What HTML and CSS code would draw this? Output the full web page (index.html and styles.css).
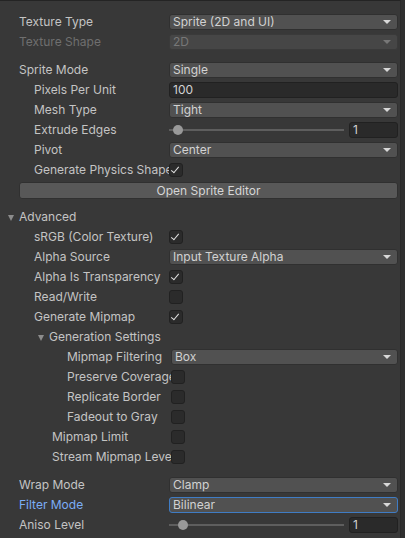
FILE: index.html
```html
<!DOCTYPE html>
<html lang="en">
<head>
  <meta charset="UTF-8" />
  <title>Texture Import Settings</title>
  <link rel="stylesheet" href="styles.css">
</head>
<body>
  <div class="inspector">

    <div class="row">
      <div class="label">Texture Type</div>
      <div class="dropdown">Sprite (2D and UI)<span class="arrow"></span></div>
    </div>
    <div class="row">
      <div class="label disabled">Texture Shape</div>
      <div class="dropdown off">2D<span class="arrow"></span></div>
    </div>

    <div class="gap"></div>

    <div class="row">
      <div class="label">Sprite Mode</div>
      <div class="dropdown">Single<span class="arrow"></span></div>
    </div>
    <div class="row">
      <div class="label in1">Pixels Per Unit</div>
      <div class="field">100</div>
    </div>
    <div class="row">
      <div class="label in1">Mesh Type</div>
      <div class="dropdown">Tight<span class="arrow"></span></div>
    </div>
    <div class="row">
      <div class="label in1">Extrude Edges</div>
      <div class="slider">
        <div class="track"><span class="thumb" style="left: 4px"></span></div>
        <div class="field num">1</div>
      </div>
    </div>
    <div class="row">
      <div class="label in1">Pivot</div>
      <div class="dropdown">Center<span class="arrow"></span></div>
    </div>
    <div class="row">
      <div class="label in1">Generate Physics Shape</div>
      <div class="check on"></div>
    </div>
    <div class="row">
      <div class="button">Open Sprite Editor</div>
    </div>

    <div class="gap small"></div>

    <div class="row">
      <div class="foldout"><span class="tri"></span>Advanced</div>
    </div>
    <div class="row">
      <div class="label in1">sRGB (Color Texture)</div>
      <div class="check on"></div>
    </div>
    <div class="row">
      <div class="label in1">Alpha Source</div>
      <div class="dropdown">Input Texture Alpha<span class="arrow"></span></div>
    </div>
    <div class="row">
      <div class="label in1">Alpha Is Transparency</div>
      <div class="check on"></div>
    </div>
    <div class="row">
      <div class="label in1">Read/Write</div>
      <div class="check"></div>
    </div>
    <div class="row">
      <div class="label in1">Generate Mipmap</div>
      <div class="check on"></div>
    </div>
    <div class="row">
      <div class="foldout in2"><span class="tri"></span>Generation Settings</div>
    </div>
    <div class="row sub">
      <div class="label in3">Mipmap Filtering</div>
      <div class="dropdown">Box<span class="arrow"></span></div>
    </div>
    <div class="row sub">
      <div class="label in3">Preserve Coverage</div>
      <div class="check"></div>
    </div>
    <div class="row sub">
      <div class="label in3">Replicate Border</div>
      <div class="check"></div>
    </div>
    <div class="row sub">
      <div class="label in3">Fadeout to Gray</div>
      <div class="check"></div>
    </div>
    <div class="row sub">
      <div class="label in2b">Mipmap Limit</div>
      <div class="check"></div>
    </div>
    <div class="row sub">
      <div class="label in2b">Stream Mipmap Levels</div>
      <div class="check"></div>
    </div>

    <div class="gap"></div>

    <div class="row">
      <div class="label">Wrap Mode</div>
      <div class="dropdown">Clamp<span class="arrow"></span></div>
    </div>
    <div class="row">
      <div class="label focus">Filter Mode</div>
      <div class="dropdown focused">Bilinear<span class="arrow"></span></div>
    </div>
    <div class="row">
      <div class="label">Aniso Level</div>
      <div class="slider">
        <div class="track"><span class="thumb" style="left: 9px"></span></div>
        <div class="field num">1</div>
      </div>
    </div>

  </div>
</body>
</html>
```

FILE: styles.css
```css
* {
  box-sizing: border-box;
}

html, body {
  margin: 0;
  padding: 0;
  background: #2f2f2f;
}

body {
  font-family: Inter, 'Liberation Sans', sans-serif;
  font-size: 12px;
  color: #c4c4c4;
}

.inspector {
  width: 401px;
  height: 538px;
  overflow: hidden;
  background: #383838;
  border-top: 1px solid #242424;
  border-right: 1px solid #2a2a2a;
  padding: 11px 2px 0 19px;
}

.row {
  display: flex;
  align-items: center;
  height: 20px;
}

.gap {
  height: 8px;
}

.gap.small {
  height: 7px;
}

.label {
  flex: 0 0 150px;
  white-space: nowrap;
  overflow: hidden;
  line-height: 20px;
}

.row.sub .label {
  flex-basis: 152px;
}

.label.in1 { padding-left: 15px; }
.label.in2b { padding-left: 33px; }
.label.in3 { padding-left: 48px; }

.label.disabled {
  color: #6f6f6f;
}

.label.focus {
  color: #7badf5;
}

.dropdown {
  position: relative;
  flex: 1;
  height: 16px;
  line-height: 14px;
  padding-left: 3px;
  background: #515151;
  border: 1px solid #303030;
  border-radius: 3px;
  color: #d2d2d2;
}

.dropdown.off {
  background: #464646;
  border-color: #3a3a3a;
  color: #777777;
}

.dropdown.focused {
  border-color: #3f7cc4;
}

.arrow {
  position: absolute;
  right: 6px;
  top: 5px;
  width: 0;
  height: 0;
  border-left: 4px solid transparent;
  border-right: 4px solid transparent;
  border-top: 4px solid #d8d8d8;
}

.dropdown.off .arrow {
  border-top-color: #777777;
}

.field {
  flex: 1;
  height: 16px;
  line-height: 14px;
  padding-left: 3px;
  background: #2a2a2a;
  border: 1px solid #212121;
  border-radius: 3px;
  color: #d2d2d2;
}

.slider {
  flex: 1;
  display: flex;
  align-items: center;
  gap: 5px;
}

.track {
  position: relative;
  flex: 1;
  height: 2px;
  background: #5e5e5e;
}

.thumb {
  position: absolute;
  top: -4px;
  width: 10px;
  height: 10px;
  border-radius: 50%;
  background: #999999;
}

.field.num {
  flex: 0 0 49px;
}

.check {
  position: relative;
  width: 14px;
  height: 14px;
  background: #2b2b2b;
  border: 1px solid #212121;
  border-radius: 3px;
}

.check.on::after {
  content: "";
  position: absolute;
  left: 3px;
  top: 1px;
  width: 3px;
  height: 7px;
  border-right: 1.5px solid #e0e0e0;
  border-bottom: 1.5px solid #e0e0e0;
  transform: rotate(40deg);
}

.button {
  flex: 1;
  height: 17px;
  line-height: 15px;
  text-align: center;
  background: #585858;
  border: 1px solid #303030;
  border-radius: 3px;
  color: #d6d6d6;
}

.foldout {
  position: relative;
  line-height: 20px;
  white-space: nowrap;
}

.foldout.in2 {
  padding-left: 30px;
}

.tri {
  position: absolute;
  left: -11px;
  top: 8px;
  width: 0;
  height: 0;
  border-left: 3.5px solid transparent;
  border-right: 3.5px solid transparent;
  border-top: 6px solid #8c8c8c;
}

.foldout.in2 .tri {
  left: 19px;
}
```
